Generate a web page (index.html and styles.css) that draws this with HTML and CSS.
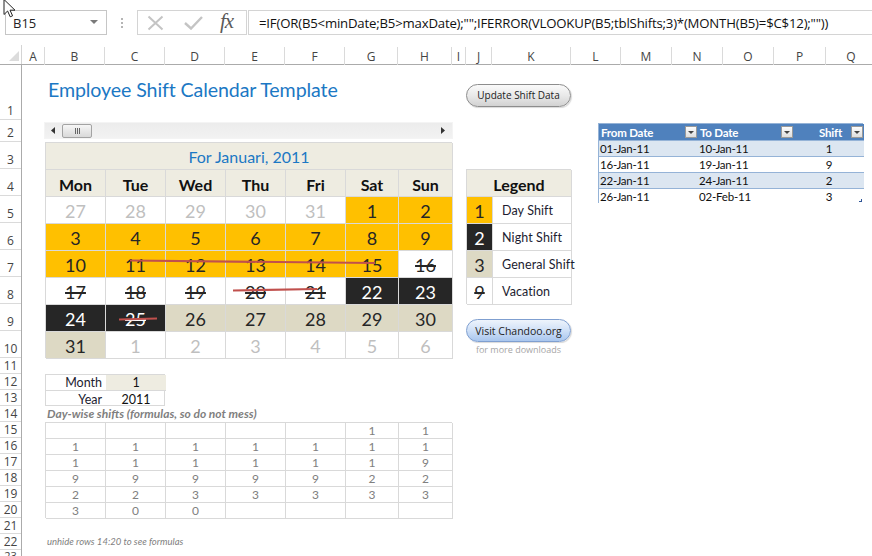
FILE: index.html
```html
<!DOCTYPE html>
<html>
<head>
<meta charset="utf-8">
<link rel="stylesheet" href="styles.css">
</head>
<body>
<div class="app">
  <div class="fbar">
    <div class="namebox"><span>B15</span><svg class="caret" width="8" height="5" viewBox="0 0 8 5"><path d="M0 0H8L4 4Z" fill="#7a7a7a"/></svg></div>
    <div class="dots"><i></i><i></i><i></i></div>
    <div class="fxbox">
      <svg width="17" height="16" viewBox="0 0 17 16"><path d="M1.5 1.5L15.5 14.5M15.5 1.5L1.5 14.5" stroke="#c4c4c4" stroke-width="2" fill="none"/></svg>
      <svg width="19" height="14" viewBox="0 0 19 14"><path d="M1 7L7 12.5L18 1" stroke="#c4c4c4" stroke-width="2.4" fill="none"/></svg>
      <span class="fx">fx</span>
    </div>
    <div class="formula">=IF(OR(B5&lt;minDate;B5&gt;maxDate);"";IFERROR(VLOOKUP(B5;tblShifts;3)*(MONTH(B5)=$C$12);""))</div>
  </div>

  <div class="colhdr">
    <div class="corner"><svg width="10" height="10" viewBox="0 0 10 10"><path d="M10 0V10H0Z" fill="#dcdcdc"/></svg></div>
    <div class="cols">
      <div>A</div><div>B</div><div>C</div><div>D</div><div>E</div><div>F</div><div>G</div><div>H</div><div>I</div><div>J</div><div>K</div><div>L</div><div>M</div><div>N</div><div>O</div><div>P</div><div>Q</div>
    </div>
  </div>

  <div class="body">
    <div class="rowhdr">
      <div class="r1">1</div><div class="r2">2</div><div class="rc">3</div><div class="rc">4</div><div class="rc">5</div><div class="rc">6</div><div class="rc">7</div><div class="rc">8</div><div class="rc">9</div><div class="rc">10</div>
      <div class="rs">11</div><div class="rs">12</div><div class="rs">13</div><div class="rs">14</div><div class="rs">15</div><div class="rs">16</div><div class="rs">17</div><div class="rs">18</div><div class="rs">19</div><div class="rs">20</div><div class="rs">21</div><div class="rs">22</div><div class="rs last">23</div>
    </div>

    <div class="sheet">
      <h1 class="title">Employee Shift Calendar Template</h1>
      <div class="btn-area"><button class="btn-gray">Update Shift Data</button></div>

      <div class="scroll">
        <svg class="arr" width="4" height="7" viewBox="0 0 4 7"><path d="M4 0V7L0 3.5Z" fill="#333"/></svg>
        <div class="thumb"><span></span><span></span><span></span></div>
        <svg class="arr right" width="4" height="7" viewBox="0 0 4 7"><path d="M0 0V7L4 3.5Z" fill="#333"/></svg>
      </div>

      <div class="tbl">
        <div class="th">From Date<i class="flt"></i></div>
        <div class="th">To Date<i class="flt"></i></div>
        <div class="th right">Shift<i class="flt"></i></div>
        <div class="td a">01-Jan-11</div><div class="td a">10-Jan-11</div><div class="td a tc">1</div>
        <div class="td">16-Jan-11</div><div class="td">19-Jan-11</div><div class="td tc">9</div>
        <div class="td a">22-Jan-11</div><div class="td a">24-Jan-11</div><div class="td a tc">2</div>
        <div class="td">26-Jan-11</div><div class="td">02-Feb-11</div><div class="td tc">3</div>
        <i class="handle"></i>
      </div>

      <div class="cal">
        <div class="cal-title">For Januari, 2011</div>
        <div class="dn">Mon</div><div class="dn">Tue</div><div class="dn">Wed</div><div class="dn">Thu</div><div class="dn">Fri</div><div class="dn">Sat</div><div class="dn">Sun</div>

        <div class="c g">27</div><div class="c g">28</div><div class="c g">29</div><div class="c g">30</div><div class="c g">31</div><div class="c o">1</div><div class="c o">2</div>
        <div class="c o">3</div><div class="c o">4</div><div class="c o">5</div><div class="c o">6</div><div class="c o">7</div><div class="c o">8</div><div class="c o">9</div>
        <div class="c o">10</div><div class="c o">11</div><div class="c o">12</div><div class="c o">13</div><div class="c o">14</div><div class="c o">15</div><div class="c s">16</div>
        <div class="c s">17</div><div class="c s">18</div><div class="c s">19</div><div class="c s">20</div><div class="c s">21</div><div class="c k">22</div><div class="c k">23</div>
        <div class="c k">24</div><div class="c k s">25</div><div class="c t">26</div><div class="c t">27</div><div class="c t">28</div><div class="c t">29</div><div class="c t">30</div>
        <div class="c t">31</div><div class="c g">1</div><div class="c g">2</div><div class="c g">3</div><div class="c g">4</div><div class="c g">5</div><div class="c g">6</div>

        <svg class="strikes" width="407" height="217" viewBox="0 0 407 217">
          <path d="M85 118.5L330 121" stroke="#c0504d" stroke-width="2.2" fill="none"/>
          <path d="M188 148.5L272 147" stroke="#c0504d" stroke-width="2.2" fill="none"/>
          <path d="M74 177.5L112 176.5" stroke="#c0504d" stroke-width="2.2" fill="none"/>
        </svg>
      </div>

      <div class="legend">
        <div class="lg-head">Legend</div>
        <div class="sw o">1</div><div class="lb">Day Shift</div>
        <div class="sw k">2</div><div class="lb">Night Shift</div>
        <div class="sw t">3</div><div class="lb">General Shift</div>
        <div class="sw s">9</div><div class="lb">Vacation</div>
      </div>

      <div class="visit">
        <button class="btn-blue">Visit Chandoo.org</button>
        <span class="more">for more downloads</span>
      </div>

      <div class="mybox">
        <div class="mlab">Month</div><div class="mval tan">1</div>
        <div class="mlab">Year</div><div class="mval">2011</div>
      </div>

      <div class="note-bold">Day-wise shifts (formulas, so do not mess)</div>

      <div class="dw">
        <div></div><div></div><div></div><div></div><div></div><div>1</div><div>1</div>
        <div>1</div><div>1</div><div>1</div><div>1</div><div>1</div><div>1</div><div>1</div>
        <div>1</div><div>1</div><div>1</div><div>1</div><div>1</div><div>1</div><div>9</div>
        <div>9</div><div>9</div><div>9</div><div>9</div><div>9</div><div>2</div><div>2</div>
        <div>2</div><div>2</div><div>3</div><div>3</div><div>3</div><div>3</div><div>3</div>
        <div>3</div><div>0</div><div>0</div><div></div><div></div><div></div><div></div>
      </div>

      <div class="note-small">unhide rows 14:20 to see formulas</div>
    </div>
  </div>

  <svg class="cursor" width="13" height="19" viewBox="0 0 13 19"><path d="M1 0.5V15.5L4.6 12L7.2 17.8L9.6 16.8L7 11.2H12Z" fill="#fff" stroke="#222" stroke-width="1"/></svg>
</div>
</body>
</html>
```

FILE: styles.css
```css
* { box-sizing: border-box; margin: 0; padding: 0; }
:root {
  --cols: 23px 60px 60px 60px 60px 60px 53px 54px 14px 26px 79px 50px 51px 51px 51px 52px 51px;
  --rows: 55px 22px repeat(8, 27px) repeat(12, 16px) 6px;
  --grid: #d9d9d9;
  --orange: #ffc000;
  --black: #262626;
  --tan: #ddd9c4;
  --cream: #eeece1;
}
html, body { width: 872px; height: 556px; overflow: hidden; background: #fff; }
body { font-family: Lato, "Open Sans", sans-serif; color: #222; }
.app { position: relative; width: 872px; height: 556px; overflow: hidden; }

/* formula bar */
.fbar { height: 45px; display: flex; align-items: flex-start; padding: 10px 0 0 5px; }
.namebox { width: 102px; height: 25px; border: 1px solid #c6c6c6; display: flex; align-items: center; justify-content: space-between; padding: 0 7px 0 7px; font: 13px "Open Sans", sans-serif; color: #222; }
.caret { margin-right: 1px; }
.dots { width: 30px; height: 25px; display: flex; flex-direction: column; align-items: center; justify-content: center; gap: 2px; }
.dots i { display: block; width: 2px; height: 2px; background: #b5b5b5; }
.fxbox { width: 110px; height: 25px; border: 1px solid #d4d4d4; display: flex; align-items: center; padding-left: 9px; gap: 0; }
.fxbox svg:first-child { margin-right: 20px; }
.fxbox svg:nth-child(2) { margin-right: 17px; }
.fx { font: italic 21px "Liberation Serif", serif; color: #5a5a5a; line-height: 1; margin-top: -2px; letter-spacing: -1px; }
.formula { flex: 1; height: 25px; border: 1px solid #d4d4d4; border-right: none; margin-left: 1px; padding-left: 10px; display: flex; align-items: center; white-space: nowrap; overflow: hidden; font: 13.2px "Open Sans", sans-serif; color: #111; letter-spacing: -0.19px; }

/* column headers */
.colhdr { height: 20px; display: flex; border-bottom: 1px solid #ababab; }
.corner { width: 22px; flex: none; border-right: 1px solid #d4d4d4; display: flex; align-items: flex-end; justify-content: flex-end; padding: 0 2px 3px 0; }
.cols { display: grid; grid-template-columns: var(--cols); }
.cols div { border-right: 1px solid #dadada; margin-top: 2px; display: flex; align-items: center; justify-content: center; font: 12px "Open Sans", sans-serif; color: #444; padding-top: 1px; }

/* body */
.body { display: flex; }
.rowhdr { width: 22px; flex: none; border-right: 1px solid #ababab; display: grid; grid-template-rows: var(--rows); }
.rowhdr div { border-bottom: 1px solid #dadada; display: flex; justify-content: center; align-items: flex-end; padding-bottom: 1px; font: 12px "Open Sans", sans-serif; color: #444; line-height: 14px; overflow: hidden; }
.rowhdr .rs { align-items: center; padding-bottom: 0; }
.rowhdr .last { align-items: flex-start; border-bottom: none; font-size: 11px; line-height: 12px; }

.sheet { display: grid; grid-template-columns: var(--cols); grid-template-rows: var(--rows); }

.title { grid-row: 1; grid-column: 2 / 10; font-weight: 400; font-size: 19.6px; color: #1b78c4; padding: 13px 0 0 3px; line-height: 24px; white-space: nowrap; letter-spacing: -0.1px; }

.btn-area { grid-row: 1; grid-column: 10 / 12; padding-top: 18px; }
.btn-gray { width: 105px; height: 23px; border-radius: 12px; border: 1px solid #8d8d8d; background: linear-gradient(#fafafa, #e9e9e9 50%, #d2d2d2); font: 10px "Open Sans", sans-serif; color: #222; box-shadow: 1px 1px 1px rgba(0,0,0,0.15); }

.scroll { grid-row: 2; grid-column: 2 / 9; margin: 2px -1px 3px -1px; background: linear-gradient(#ececec, #f2f2f2); border: 1px solid #f4f4f4; display: flex; align-items: center; padding-left: 6px; position: relative; }
.arr.right { margin-left: auto; margin-right: 7px; }
.thumb { margin-left: 7px; width: 30px; height: 14px; border: 1px solid #a3a3a3; border-radius: 2px; background: linear-gradient(#f6f6f6, #d9d9d9); display: flex; justify-content: center; align-items: center; gap: 1px; }
.thumb span { width: 1px; height: 6px; background: #666; }

/* shift table */
.tbl { grid-row: 2 / 7; grid-column: 12 / 18; margin: 3px 0 0 27px; width: 265px; height: 80px; display: grid; grid-template-columns: 99px 96px 70px; grid-template-rows: repeat(5, 16px); border: 1px solid #95b3d7; position: relative; font: 11.5px Lato, sans-serif; }
.th { background: #4f81bd; color: #fff; font-weight: 700; padding-left: 2px; display: flex; align-items: center; position: relative; letter-spacing: -0.2px; }
.th.right { justify-content: flex-end; padding-right: 22px; }
.flt { position: absolute; right: 1px; top: 2px; width: 12px; height: 12px; border: 1px solid #9a9a9a; background: linear-gradient(#fdfdfd, #dedede); }
.flt::after { content: ""; position: absolute; left: 2px; top: 4px; border-left: 3px solid transparent; border-right: 3px solid transparent; border-top: 3px solid #444; }
.td { border-top: 1px solid #95b3d7; display: flex; align-items: center; padding-left: 1px; color: #111; background: #fff; letter-spacing: -0.2px; }
.td.a { background: #dce6f1; }
.td.tc { justify-content: center; padding-left: 0; }
.handle { position: absolute; right: 0; bottom: 0; width: 3px; height: 3px; border-right: 1px solid #2f5597; border-bottom: 1px solid #2f5597; }

/* calendar */
.cal { grid-row: 3 / 11; grid-column: 2 / 9; display: grid; grid-template-columns: 60px 60px 60px 60px 60px 53px 54px; grid-template-rows: repeat(8, 27px); border-left: 1px solid var(--grid); border-top: 1px solid var(--grid); position: relative; margin-top: 0; }
.cal > div { border-right: 1px solid var(--grid); border-bottom: 1px solid var(--grid); display: flex; align-items: center; justify-content: center; }
.cal-title { grid-column: 1 / 8; background: var(--cream); color: #1b78c4; font-size: 16px; padding-top: 1px; }
.dn { background: var(--cream); font-weight: 700; font-size: 16px; color: #111; padding-top: 3px; }
.c { font-size: 18px; color: #262626; background: #fff; padding-top: 2px; }
.c.g { color: #bfbfbf; }
.c.o { background: var(--orange); }
.c.k { background: var(--black); color: #fff; }
.c.t { background: var(--tan); }
.c.s { text-decoration: line-through; text-decoration-thickness: 1.5px; }
.strikes { position: absolute; left: -1px; top: -1px; pointer-events: none; }

/* legend */
.legend { grid-row: 4 / 9; grid-column: 10 / 12; display: grid; grid-template-columns: 26px 79px; grid-template-rows: repeat(5, 27px); border-left: 1px solid var(--grid); border-top: 1px solid var(--grid); }
.legend > div { border-right: 1px solid var(--grid); border-bottom: 1px solid var(--grid); display: flex; align-items: center; }
.lg-head { grid-column: 1 / 3; background: var(--cream); justify-content: center; font-weight: 700; font-size: 16px; color: #111; padding-top: 3px; }
.sw { justify-content: center; font-size: 18px; padding-top: 2px; background: #fff; color: #262626; }
.sw.o { background: var(--orange); }
.sw.k { background: var(--black); color: #fff; }
.sw.t { background: var(--tan); }
.sw.s { text-decoration: line-through; text-decoration-thickness: 1.5px; }
.lb { padding-left: 9px; font-size: 12.5px; color: #1c1c30; white-space: nowrap; overflow: visible; letter-spacing: 0.1px; }

.visit { grid-row: 9 / 11; grid-column: 10 / 12; display: flex; flex-direction: column; align-items: center; padding-top: 15px; }
.btn-blue { width: 105px; height: 23px; border-radius: 12px; border: 1px solid #7f9fd0; background: linear-gradient(#eef4fc, #cfe0f7 50%, #a9c6ee); font: 10.5px "Open Sans", sans-serif; color: #222; box-shadow: 1px 1px 1px rgba(0,0,0,0.15); }
.more { margin-top: 1px; font: 9px "Open Sans", sans-serif; color: #a6a6a6; }

/* month/year */
.mybox { grid-row: 12 / 14; grid-column: 2 / 4; display: grid; grid-template-columns: 60px 60px; grid-template-rows: 16px 16px; border: 1px solid var(--grid); font-size: 12.5px; }
.mybox > div { display: flex; align-items: center; }
.mybox > div:nth-child(1), .mybox > div:nth-child(2) { border-bottom: 1px solid var(--grid); }
.mlab { justify-content: flex-end; padding-right: 4px; color: #1c1c30; }
.mval { justify-content: center; color: #111; }
.mval.tan { background: var(--cream); }

.note-bold { grid-row: 14; grid-column: 2 / 10; font-style: italic; font-weight: 700; font-size: 12px; color: #7f7f7f; padding-left: 2px; line-height: 16px; white-space: nowrap; }

.dw { grid-row: 15 / 21; grid-column: 2 / 9; display: grid; grid-template-columns: 60px 60px 60px 60px 60px 53px 54px; grid-template-rows: repeat(6, 16px); border-left: 1px solid var(--grid); border-top: 1px solid var(--grid); }
.dw > div { border-right: 1px solid var(--grid); border-bottom: 1px solid var(--grid); display: flex; align-items: center; justify-content: center; font-size: 12px; color: #808080; }

.note-small { grid-row: 22; grid-column: 2 / 10; font-style: italic; font-size: 9.5px; color: #7f7f7f; padding-left: 2px; line-height: 16px; white-space: nowrap; }

.cursor { position: absolute; left: 3px; top: -1px; }
```
